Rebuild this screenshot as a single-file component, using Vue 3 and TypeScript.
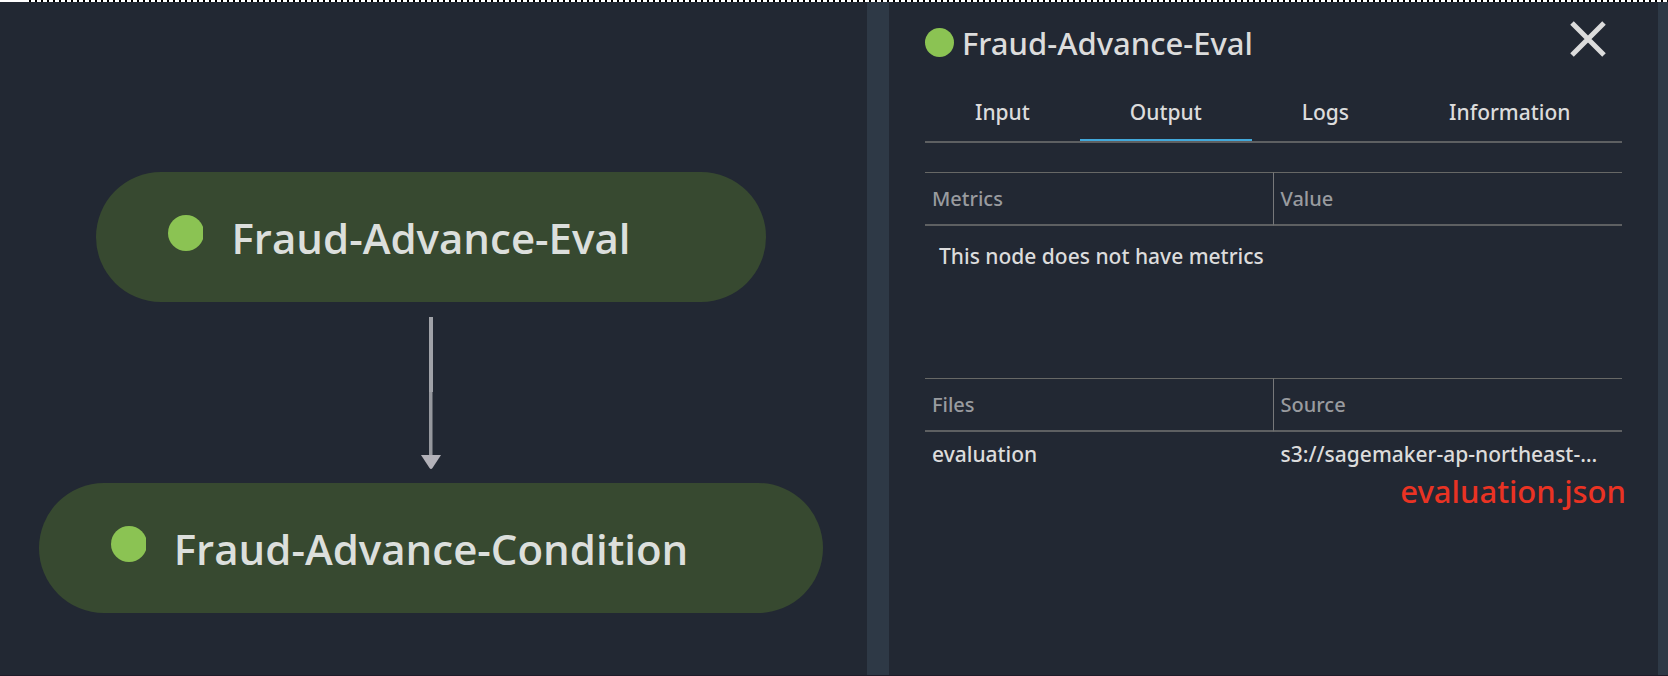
<script setup lang="ts">
import { ref } from 'vue'

interface Row { file: string; source: string }

const nodes: string[] = ['Fraud-Advance-Eval', 'Fraud-Advance-Condition']
const tabs: string[] = ['Input', 'Output', 'Logs', 'Information']
const activeTab = ref<string>('Output')
const files: Row[] = [{ file: 'evaluation', source: 's3://sagemaker-ap-northeast-…' }]
</script>

<template>
  <div class="app">
    <div class="strip"></div>
    <div class="workspace">
      <main class="graph">
        <template v-for="(name, i) in nodes" :key="name">
          <svg v-if="i > 0" class="arrow" width="20" height="152" viewBox="0 0 20 152" aria-hidden="true">
            <path d="M8 0h4v75h-4z" fill="#a0a2a8" />
            <path d="M8 75h3.5v64h-3.5z" fill="#96989e" />
            <path d="M0 138h20l-8.500 13q-1.500 2-3 0z" fill="#b3b2b9" />
          </svg>
          <div class="node">
            <svg class="node-dot" width="35" height="36" viewBox="0 0 35 36" aria-hidden="true">
              <circle cx="18" cy="18" r="18" fill="#8bc353" />
            </svg>
            <span class="node-name">{{ name }}</span>
          </div>
        </template>
      </main>

      <aside class="panel">
        <header class="head">
          <span class="dot"></span>
          <h1 class="title">Fraud-Advance-Eval</h1>
          <button class="close" type="button" aria-label="Close">
            <svg width="36" height="36" viewBox="0 0 36 36" aria-hidden="true">
              <path d="M2 2l32 32M34 2L2 34" stroke="#dcdcdc" stroke-width="5" fill="none" />
            </svg>
          </button>
        </header>

        <nav class="tabs" role="tablist">
          <button
            v-for="tab in tabs"
            :key="tab"
            class="tab"
            :class="{ active: tab === activeTab }"
            type="button"
            role="tab"
            :aria-selected="tab === activeTab"
            @click="activeTab = tab"
          >{{ tab }}</button>
        </nav>

        <table class="grid metrics">
          <thead>
            <tr><th>Metrics</th><th>Value</th></tr>
          </thead>
          <tbody>
            <tr><td class="empty" colspan="2">This node does not have metrics</td></tr>
          </tbody>
        </table>

        <table class="grid">
          <thead>
            <tr><th>Files</th><th>Source</th></tr>
          </thead>
          <tbody>
            <tr v-for="row in files" :key="row.file">
              <td>{{ row.file }}</td>
              <td>{{ row.source }}</td>
            </tr>
          </tbody>
        </table>
        <p class="note">evaluation.json</p>
      </aside>
    </div>
  </div>
</template>

<style>
body {
  margin: 0;
  background: #222833;
}
</style>

<style scoped>
.app {
  display: flex;
  flex-direction: column;
  min-height: 100vh;
  box-sizing: border-box;
  border-bottom: 1px solid #1f1c2a;
  background: #222833;
  color: #dcdcdc;
  font-family: "Noto Sans", "Open Sans", sans-serif;
  font-size: 21px;
  font-weight: 500;
}
.strip {
  height: 2px;
  background:
    linear-gradient(#fff, #fff) 0 0 / 29px 2px no-repeat,
    linear-gradient(90deg, #000 2px, #fff 2px) 29px 0 / 6px 2px repeat-x;
}
.workspace {
  flex: 1;
  display: grid;
  grid-template-columns: 867fr 801fr;
}
.graph {
  display: flex;
  flex-direction: column;
  align-items: center;
  padding: 170px 5px 60px 0;
}
.node {
  display: flex;
  align-items: center;
  gap: 28px;
  height: 130px;
  box-sizing: border-box;
  padding: 0 135px 0 72px;
  border-radius: 65px;
  background: #374930;
}
.node-dot {
  flex: none;
  margin-bottom: 8px;
}
.node-name {
  color: #dcdfdc;
  font-family: "Open Sans", "Noto Sans", sans-serif;
  font-size: 42px;
  font-weight: 600;
  white-space: nowrap;
}
.arrow {
  margin: 15px 0 14px;
}
.panel {
  min-width: 0;
  box-sizing: border-box;
  border-left: 22px solid #2e3946;
  border-right: 10px solid #2e3946;
  padding: 19px 36px 24px;
}
.head {
  display: flex;
  align-items: center;
  gap: 8px;
  height: 44px;
}
.dot {
  width: 29px;
  height: 29px;
  margin-bottom: 2px;
  border-radius: 50%;
  background: #8bc353;
}
.title {
  flex: 1;
  margin: 0;
  font-size: 31px;
  font-weight: 500;
  line-height: 44px;
  white-space: nowrap;
}
.close {
  align-self: flex-start;
  margin-right: 16px;
  padding: 0;
  border: 0;
  background: none;
  line-height: 0;
  cursor: pointer;
}
.tabs {
  display: flex;
  height: 76px;
  border-bottom: 2px solid #5e6062;
}
.tab {
  padding: 0 50px;
  margin-top: 18px;
  border: 0;
  background: none;
  color: inherit;
  font: inherit;
  cursor: pointer;
  white-space: nowrap;
}
.tab.active {
  box-shadow: inset 0 -2px #42a8da;
}
.grid {
  width: 100%;
  table-layout: fixed;
  border-collapse: separate;
  border-spacing: 0;
  margin-top: 29px;
}
.grid.metrics {
  height: 177px;
}
.grid th {
  height: 51px;
  padding: 0 7px;
  border-top: 1px solid #676866;
  border-bottom: 2px solid #5e6062;
  color: #999b9f;
  font-size: 20px;
  font-weight: 500;
  line-height: 28px;
  text-align: left;
}
.grid th:first-child {
  border-right: 1px solid #77787a;
}
.grid td {
  padding: 8px 7px 0;
  line-height: 28px;
  white-space: nowrap;
  vertical-align: top;
}
.grid td.empty {
  padding: 16px 14px 0;
}
.note {
  margin: 1px -4px 0 0;
  color: #ea3323;
  font-size: 31px;
  font-weight: 500;
  line-height: 44px;
  text-align: right;
}
</style>
